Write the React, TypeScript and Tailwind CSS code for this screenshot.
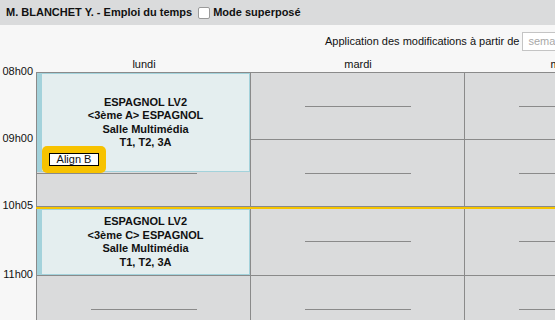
import React from "react";

const days = ["lundi", "mardi", "mercredi"];
const rowHeights = ["h-[67px]", "h-[67px]", "h-[69px]", "h-[68px]"];

function Slot({ h, first }: { h: string; first?: boolean }) {
  return (
    <div className={`${h} ${first ? "" : "border-t border-[#8a8a8a]"} flex items-center justify-center`}>
      <div className="w-[106px] h-px bg-[#8a8a8a]" />
    </div>
  );
}

function Course({ cls }: { cls: string }) {
  return (
    <div className="flex flex-col items-center font-bold text-[11px] leading-[13.5px] text-[#111]">
      <span>ESPAGNOL LV2</span>
      <span>{`<${cls}> ESPAGNOL`}</span>
      <span>Salle Multimédia</span>
      <span>T1, T2, 3A</span>
    </div>
  );
}

export default function App() {
  return (
    <div className="w-[555px] h-[320px] overflow-hidden bg-[#f7f7f7] text-[11px] text-[#111] font-['Liberation_Sans',Arial,sans-serif]">
      {/* title bar */}
      <div className="h-[25px] bg-[#dadbdc] flex items-center pl-[6px] gap-[6px]">
        <span className="font-bold">M. BLANCHET Y. - Emploi du temps</span>
        <span className="w-[12px] h-[12px] bg-white border border-[#9a9a9a] rounded-[2px]" />
        <span className="font-bold -ml-[3px]">Mode superposé</span>
      </div>
      {/* application row */}
      <div className="h-[32px] flex items-center pl-[325px] gap-[3px] whitespace-nowrap">
        <span>Application des modifications à partir de</span>
        <div className="shrink-0 w-[80px] h-[19px] border border-[#c4c4c4] bg-white flex items-center pl-[5px] text-[#a8a8a8]">
          semaine
        </div>
      </div>
      {/* day headers */}
      <div className="h-[15px] flex pl-[37px] leading-[15px] whitespace-nowrap">
        {days.map((d) => (
          <div key={d} className="w-[214px] shrink-0 text-center">
            {d}
          </div>
        ))}
      </div>
      {/* grid */}
      <div className="relative flex">
        <div className="w-[36px] shrink-0 flex flex-col text-right pr-[3px] leading-[13px]">
          {["08h00", "09h00", "10h05", "11h00"].map((t, i) => (
            <div key={t} className={rowHeights[i]}>
              <div className="-mt-[7px]">{t}</div>
            </div>
          ))}
        </div>
        <div className="flex border-t border-[#8a8a8a]">
          {days.map((d) => (
            <div key={d} className="w-[214px] shrink-0 border-l border-[#8a8a8a] bg-[#dadbdc] flex flex-col">
              {rowHeights.map((h, i) => (
                <Slot key={i} h={i === 0 ? "h-[66px]" : h} first={i === 0} />
              ))}
            </div>
          ))}
        </div>

        {/* line under course 1 */}
        <div className="absolute left-[37px] top-[101px] w-[159px] h-px bg-[#8a8a8a]" />

        {/* current time marker */}
        <div className="absolute left-[36px] right-0 top-[134px] h-[3px] border-t border-[#8a8a8a] bg-[#f5c400]" />

        {/* course 1 */}
        <div className="absolute left-[37px] top-[1px] w-[213px] h-[99px] bg-[#e4eeef] border border-[#a3d2db] border-l-[5px] flex items-center justify-center">
          <Course cls="3ème A" />
        </div>
        <div className="absolute left-[42px] top-[74px] w-[64px] h-[27px] rounded-[5px] bg-[#f7c200] flex items-center justify-center">
          <div className="w-[50px] h-[13px] bg-white border border-black flex items-center justify-center leading-[11px]">
            Align B
          </div>
        </div>

        {/* course 2 */}
        <div className="absolute left-[37px] top-[137px] w-[213px] h-[66px] bg-[#e4eeef] border border-[#a3d2db] border-l-[5px] flex items-center justify-center">
          <Course cls="3ème C" />
        </div>
      </div>
    </div>
  );
}
